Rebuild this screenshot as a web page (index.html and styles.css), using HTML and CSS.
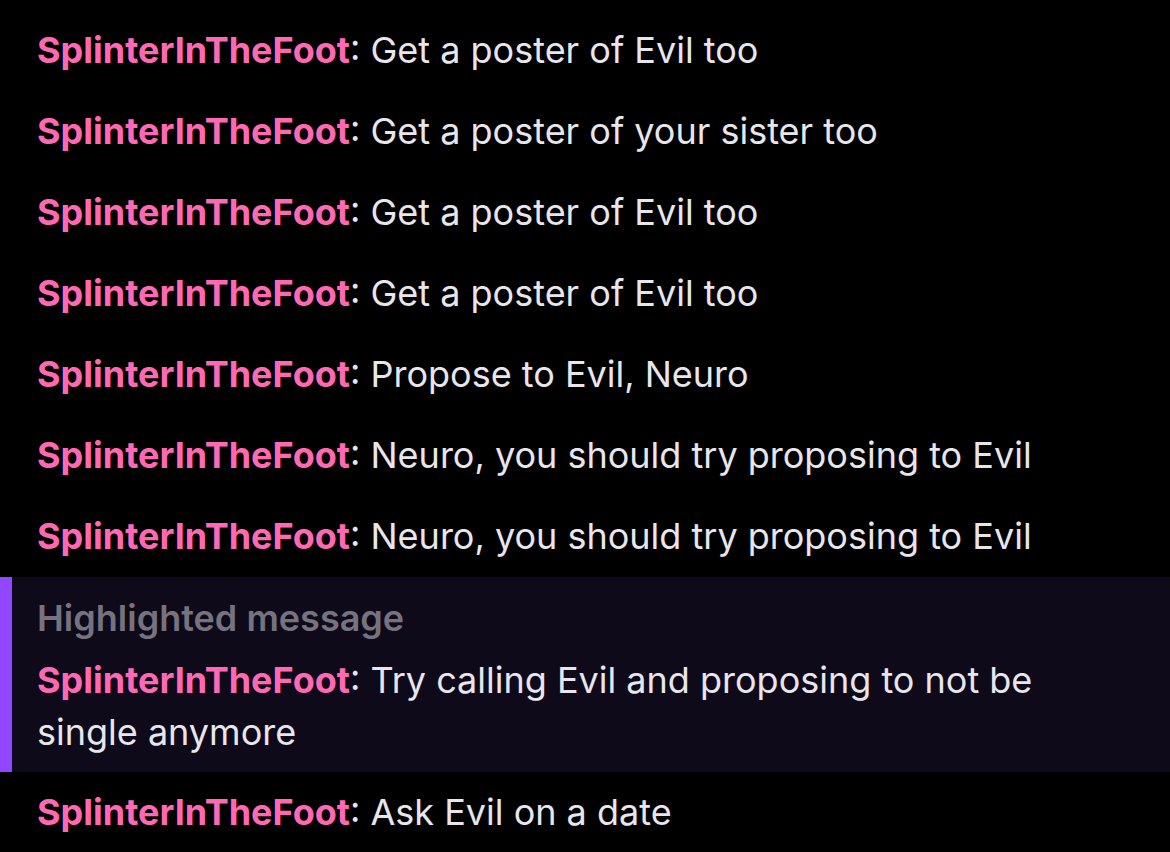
FILE: index.html
```html
<!DOCTYPE html>
<html>
<head>
<meta charset="utf-8">
<link rel="stylesheet" href="styles.css">
</head>
<body>
<div class="chat">
  <div class="line"><span class="user">SplinterInTheFoot</span>: Get a poster of Evil too</div>
  <div class="line"><span class="user">SplinterInTheFoot</span>: Get a poster of your sister too</div>
  <div class="line"><span class="user">SplinterInTheFoot</span>: Get a poster of Evil too</div>
  <div class="line"><span class="user">SplinterInTheFoot</span>: Get a poster of Evil too</div>
  <div class="line"><span class="user">SplinterInTheFoot</span>: Propose to Evil, Neuro</div>
  <div class="line"><span class="user">SplinterInTheFoot</span>: Neuro, you should try proposing to Evil</div>
  <div class="line"><span class="user">SplinterInTheFoot</span>: Neuro, you should try proposing to Evil</div>
  <div class="line highlight">
    <div class="label">Highlighted message</div>
    <div class="body"><span class="user">SplinterInTheFoot</span>: Try calling Evil and proposing to not be single anymore</div>
  </div>
  <div class="line"><span class="user">SplinterInTheFoot</span>: Ask Evil on a date</div>
</div>
</body>
</html>
```
FILE: styles.css
```css
html, body {
  margin: 0;
  padding: 0;
  background: #000;
  height: 100%;
  overflow: hidden;
}
.chat {
  padding-top: 9.5px;
  font-family: Inter, "Noto Sans", sans-serif;
  font-size: 36px;
  line-height: 54px;
  color: #e8e6ec;
}
.line {
  padding: 13.5px 60px 13.5px 37px;
}
.user {
  color: #ff69b4;
  font-weight: 700;
}
.highlight {
  background: #0e0a19;
  border-left: 12px solid #9146ff;
  padding: 14px 60px 14px 25px;
}
.label {
  color: #77727f;
  font-weight: 600;
  margin-bottom: 9px;
}
.body {
  line-height: 52px;
}
```
